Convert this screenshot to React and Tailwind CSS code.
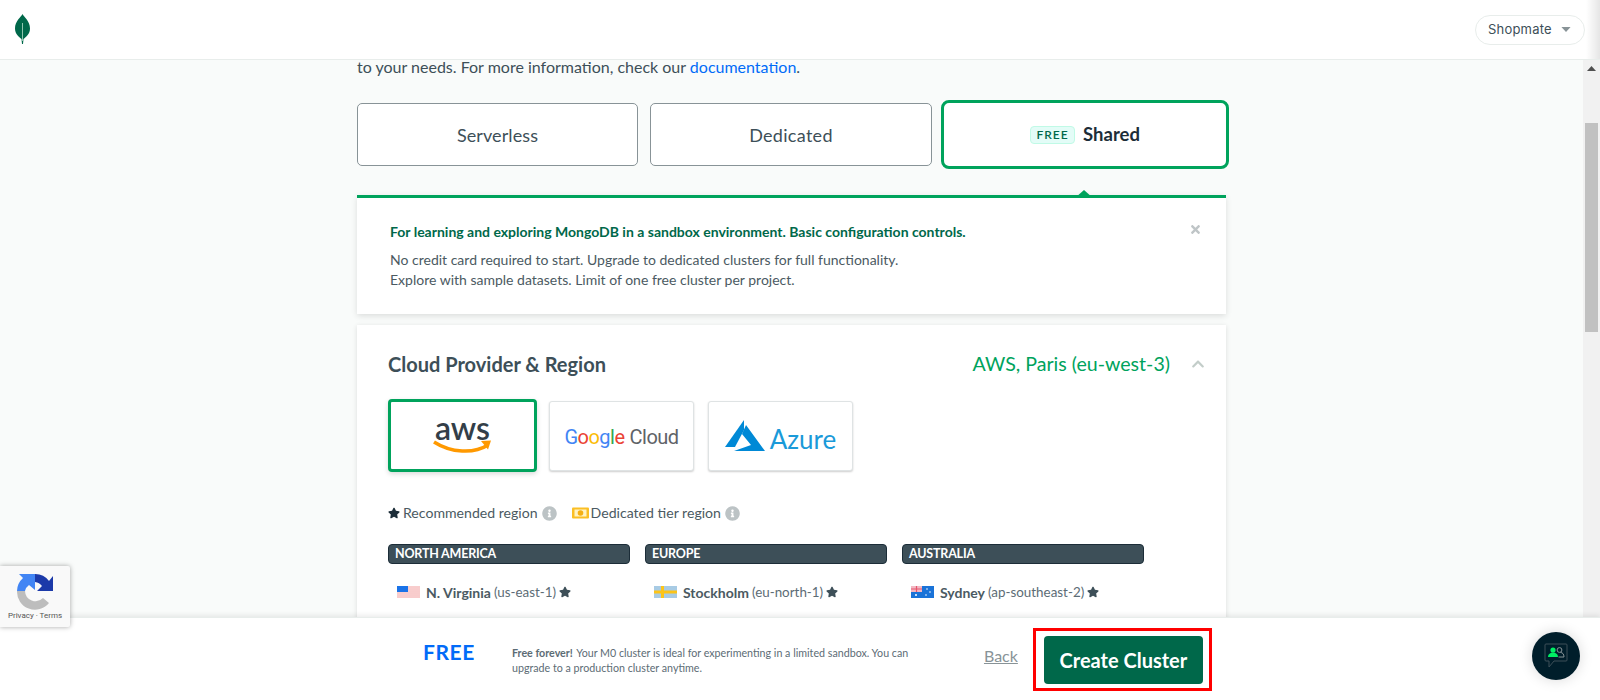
import { FaStar, FaInfoCircle, FaChevronUp, FaTimes } from 'react-icons/fa'

const REGIONS = [
  { area: 'NORTH AMERICA', name: 'N. Virginia', code: '(us-east-1)', flag: <UsFlag /> },
  { area: 'EUROPE', name: 'Stockholm', code: '(eu-north-1)', flag: <SeFlag /> },
  { area: 'AUSTRALIA', name: 'Sydney', code: '(ap-southeast-2)', flag: <AuFlag /> },
]

export default function App() {
  return (
    <div className="relative h-[700px] overflow-hidden bg-[#f9fbfa] font-[Lato,sans-serif] text-[#3d4f58]">
      {/* Top bar */}
      <header className="relative z-10 flex h-[60px] items-center justify-between border-b border-[#e8edeb] bg-white pl-[15px] pr-[15px]">
        <Leaf />
        <div className="flex h-[30px] w-[110px] items-center rounded-full border border-[#e8edeb] pl-[12px] font-[Inter,sans-serif] text-[13px] tracking-[0.2px] text-[#3d4f58]">
          Shopmate
          <svg width="10" height="5" viewBox="0 0 11 6" className="ml-[9px]"><path d="M0 0h11L5.500 6z" fill="#889397" /></svg>
        </div>
        <div className="absolute right-0 top-0 h-full w-[14px] bg-gradient-to-r from-transparent to-black/10" />
      </header>

      <div className="flex h-[640px]">
        {/* Page content */}
        <main className="min-w-0 flex-1">
          <div className="mx-auto w-[869px]">
            <p className="h-[14px] text-[16px] leading-[14px] text-[#3d4f58]">
              to your needs. For more information, check our <a className="text-[#016bf8]">documentation</a>.
            </p>

            <div className="mt-[26px] flex items-center">
              <button className="flex h-[63px] w-[281px] shrink-0 items-center justify-center rounded-[5px] border border-[#889397] bg-white pt-[1px] text-[18px] tracking-[0.1px] text-[#3d4f58]">Serverless</button>
              <button className="ml-[12px] flex h-[63px] w-[282px] shrink-0 items-center justify-center rounded-[5px] border border-[#889397] bg-white pt-[1px] text-[18px] tracking-[0.3px] text-[#3d4f58]">Dedicated</button>
              <button className="ml-[9px] flex h-[69px] w-[288px] shrink-0 items-center justify-center rounded-[8px] border-[3px] border-[#00a35c] bg-white pt-[1px] text-[18.5px] font-bold text-[#1c2d38]">
                <span className="mr-[8px] flex h-[18px] w-[45px] items-center justify-center rounded-[4px] border border-[#c0fae6] bg-[#e3fcf7] text-[12px] font-semibold tracking-[1px] text-[#00684a]">FREE</span>
                Shared
              </button>
            </div>

            {/* Description panel */}
            <section className="relative mt-[26px] h-[119px] border-t-[3px] border-[#00a35c] bg-white pl-[33px] pt-[26px] shadow-[0_2px_6px_rgba(0,0,0,0.12)]">
              <span className="absolute left-[718px] top-[-8px] h-0 w-0 border-x-[9px] border-b-[8px] border-x-transparent border-b-[#00a35c]" />
              <FaTimes className="absolute right-[24px] top-[25px] text-[13px] text-[#bfc5c7]" />
              <h3 className="text-[14px] font-bold leading-[16px] text-[#00684a]">For learning and exploring MongoDB in a sandbox environment. Basic configuration controls.</h3>
              <p className="mt-[10px] text-[14px] leading-[20px] text-[#4b5a62]">
                No credit card required to start. Upgrade to dedicated clusters for full functionality.<br />
                Explore with sample datasets. Limit of one free cluster per project.
              </p>
            </section>

            {/* Cloud provider card */}
            <section className="mt-[11px] h-[375px] bg-white px-[31px] pt-[29px] shadow-[0_1px_5px_rgba(0,0,0,0.12)]">
              <div className="flex h-[20px] items-center justify-between">
                <h2 className="text-[20px] font-bold text-[#3d4f58]">Cloud Provider &amp; Region</h2>
                <div className="flex items-center">
                  <span className="text-[19.6px] text-[#00a35c]">AWS, Paris (eu-west-3)</span>
                  <FaChevronUp className="ml-[21px] mr-[-10px] text-[14px] text-[#c3cdc9]" />
                </div>
              </div>

              <div className="mt-[25px] flex items-center">
                <div className="flex h-[73px] w-[149px] flex-col items-center justify-center rounded-[4px] border-[3px] border-[#00a35c] bg-white shadow-[0_2px_5px_rgba(0,0,0,0.15)]">
                  <span className="-mt-[2px] text-[32px] font-semibold leading-[26px] text-[#333e48]">aws</span>
                  <svg width="60" height="14" viewBox="0 0 60 14" className="-mt-[1px]">
                    <path d="M1 2c17 11 40 12 54 3" fill="none" stroke="#f90" strokeWidth="3.500" />
                    <path d="M48 1l10-.5-3 9z" fill="#f90" />
                  </svg>
                </div>
                <div className="ml-[12px] flex h-[70px] w-[145px] items-center justify-center rounded-[3px] border border-[#dfe3e4] bg-white pt-[3px] text-[20px] shadow-[0_1px_2px_rgba(0,0,0,0.2)]">
                  <span className="font-[Roboto,sans-serif] tracking-[-0.5px]">
                    <span className="text-[#4285f4]">G</span><span className="text-[#ea4335]">o</span><span className="text-[#fbbc05]">o</span><span className="text-[#4285f4]">g</span><span className="text-[#34a853]">l</span><span className="text-[#ea4335]">e</span>
                    <span className="ml-[5px] text-[#5f6368]">Cloud</span>
                  </span>
                </div>
                <div className="ml-[14px] flex h-[70px] w-[145px] items-center justify-center rounded-[3px] border border-[#dfe3e4] bg-white shadow-[0_1px_2px_rgba(0,0,0,0.2)]">
                  <svg width="41" height="32" viewBox="0 0 41 32">
                    <path d="M19 0L0 27H10L19 10Z" fill="#0089d6" />
                    <path d="M21 5L40 31H9L26 25L17 14Z" fill="#0089d6" />
                  </svg>
                  <span className="ml-[4px] mt-[7px] text-[26px] leading-none text-[#1a9ad9]">Azure</span>
                </div>
              </div>

              <div className="mt-[33px] flex h-[16px] items-center text-[14.1px] text-[#4b5a62]">
                <FaStar className="text-[12px] text-[#1c2d38]" />
                <span className="ml-[3px]">Recommended region</span>
                <FaInfoCircle className="ml-[4px] text-[15px] text-[#bcc3c5]" />
                <svg width="17" height="12" viewBox="0 0 17 12" className="ml-[15px]">
                  <rect width="17" height="11" y=".5" rx="1" fill="#fbbf24" />
                  <rect x="2.500" y="2.500" width="12" height="7" fill="#fff3c4" />
                  <circle cx="8.500" cy="6" r="2.800" fill="#f5b014" />
                </svg>
                <span className="ml-[2px]">Dedicated tier region</span>
                <FaInfoCircle className="ml-[4px] text-[15px] text-[#bcc3c5]" />
              </div>

              <div className="mt-[23px] grid w-[756px] grid-cols-3 gap-x-[15px]">
                {REGIONS.map(r => (
                  <div key={r.area}>
                    <div className="flex h-[20px] items-center rounded-[4px] border border-[#1c2d38] bg-[#3d4f58] pl-[6px] text-[12.5px] font-bold tracking-[-0.2px] text-white">{r.area}</div>
                    <div className="mt-[19px] flex h-[18px] items-center pl-[9px]">
                      {r.flag}
                      <span className="ml-[6px] text-[14px] font-bold text-[#4b5a62]">{r.name}</span>
                      <span className="ml-[3px] text-[13.4px] text-[#5c6c75]">{r.code}</span>
                      <FaStar className="ml-[3px] text-[12px] text-[#3d4f58]" />
                    </div>
                  </div>
                ))}
              </div>
            </section>
          </div>
        </main>

        {/* Scrollbar */}
        <div className="relative w-[17px] shrink-0 bg-[#f1f1f1]">
          <svg width="9" height="5" viewBox="0 0 9 5" className="mx-auto mt-[6px]"><path d="M4.500 0L9 5H0z" fill="#505050" /></svg>
          <div className="absolute left-[2px] top-[63px] h-[209px] w-[13px] bg-[#c1c1c1]" />
        </div>
      </div>

      {/* Bottom action bar */}
      <footer className="absolute bottom-0 left-0 right-0 flex h-[83px] items-center border-t border-[#e8edeb] bg-white pl-[423px] shadow-[0_-2px_5px_rgba(0,0,0,0.08)]">
        <span className="-mt-[14px] text-[21px] font-bold tracking-[0.6px] text-[#016bf8]">FREE</span>
        <p className="ml-[37px] mt-[2px] w-[405px] text-[10.7px] leading-[15px] text-[#5c6c75]">
          <span className="mr-[1px] font-bold">Free forever!</span> Your M0 cluster is ideal for experimenting in a limited sandbox. You can upgrade to a production cluster anytime.
        </p>
        <a className="-mt-[6px] ml-[67px] text-[16px] text-[#889397] underline">Back</a>
        <div className="ml-[15px] border-[3px] border-[#ff0000] pb-[4px] pl-[8px] pr-[6px] pt-[5px]">
          <button className="flex h-[48px] w-[159px] items-center justify-center rounded-[4px] bg-[#00684a] text-[20px] font-bold text-white">Create Cluster</button>
        </div>
      </footer>

      {/* reCAPTCHA badge */}
      <div className="absolute left-0 top-[566px] flex h-[61px] w-[70px] flex-col items-center rounded-r-[2px] bg-[#f9f9f9] pt-[7px] shadow-[0_0_5px_rgba(0,0,0,0.35)]">
        <svg width="38" height="37" viewBox="0 0 38 37">
          <path d="M1 18H9A10.500 10.500 0 0 0 27 25L33 30A18 18 0 0 1 1 18Z" fill="#bdbdbd" />
          <path d="M19 1A17 17 0 0 1 33 8L37 3V18H21L26 13A10 10 0 0 0 19 9Z" fill="#1c3aa9" />
          <path d="M1 18A18 18 0 0 1 7 5L3 1H19V17L13 12A10 10 0 0 0 9 18Z" fill="#4285f4" />
        </svg>
        <span className="mt-[1px] font-[Roboto,sans-serif] text-[8px] leading-[10px] text-[#555]">Privacy · Terms</span>
      </div>

      {/* Chat bubble */}
      <div className="absolute left-[1532px] top-[632px] flex h-[48px] w-[48px] items-center justify-center rounded-full bg-[#001e2b] shadow-[0_0_14px_rgba(0,0,0,0.15)]">
        <svg width="24" height="26" viewBox="0 0 24 26" fill="none">
          <path d="M2 1h20a1 1 0 0 1 1 1v15a1 1 0 0 1-1 1H10l-5 6v-6H2a1 1 0 0 1-1-1V2a1 1 0 0 1 1-1z" stroke="#3d4f58" strokeWidth="1" />
          <circle cx="9" cy="7" r="2.600" fill="#00ed64" />
          <path d="M4 14c0-6 10-6 10 0z" fill="#00ed64" />
          <circle cx="15.500" cy="7" r="2.400" stroke="#889397" />
          <path d="M14.500 14h5.500c0-3-1.500-4.500-3.500-4.500" stroke="#889397" />
        </svg>
      </div>
    </div>
  )
}

function Leaf() {
  return (
    <svg width="15" height="30" viewBox="0 0 15 30" className="-mt-[2px]">
      <path d="M7.500 0C9 3 15 7 15 14.500C15 20 11 23 8.500 25L8 30H7L6.500 25C4 23 0 20 0 14.500C0 7 6 3 7.500 0Z" fill="#00684a" />
      <path d="M7.500 9V27" stroke="#8fc5ae" strokeWidth="1" />
    </svg>
  )
}

function UsFlag() {
  return (
    <svg width="23" height="12" viewBox="0 0 23 12">
      <rect width="23" height="12" fill="#fff" />
      <path d="M0 1h23M0 3h23M0 5h23M0 7h23M0 9h23M0 11h23" stroke="#f19a9a" strokeWidth="1" />
      <rect width="11" height="6" fill="#1a73e8" />
    </svg>
  )
}

function SeFlag() {
  return (
    <svg width="23" height="12" viewBox="0 0 23 12">
      <rect width="23" height="12" fill="#a8cbe4" />
      <rect x="7" width="3" height="12" fill="#fcc419" />
      <rect y="4.500" width="23" height="3" fill="#fcc419" />
    </svg>
  )
}

function AuFlag() {
  return (
    <svg width="23" height="12" viewBox="0 0 23 12">
      <rect width="23" height="12" fill="#1a73d8" />
      <rect width="11" height="6" fill="#f3b9c4" />
      <path d="M0 3h11M5.500 0v6" stroke="#e5566e" strokeWidth="1.200" />
      <circle cx="5" cy="9" r="1" fill="#fff" />
      <circle cx="16" cy="3" r=".8" fill="#fff" />
      <circle cx="19" cy="6" r=".8" fill="#fff" />
      <circle cx="15" cy="9" r=".8" fill="#fff" />
    </svg>
  )
}
